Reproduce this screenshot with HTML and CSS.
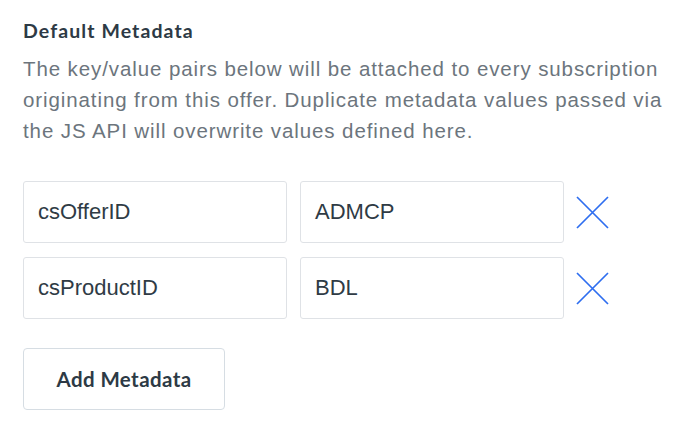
FILE: index.html
```html
<!DOCTYPE html>
<html>
<head>
<meta charset="utf-8">
<link rel="stylesheet" href="styles.css">
</head>
<body>
<section class="panel">
  <h2 class="title">Default Metadata</h2>
  <p class="desc">The key/value pairs below will be attached to every subscription originating from this offer. Duplicate metadata values passed via the JS API will overwrite values defined here.</p>
  <div class="rows">
    <div class="row">
      <div class="field">csOfferID</div>
      <div class="field">ADMCP</div>
      <button class="remove" aria-label="Remove"><svg width="33" height="33" viewBox="0 0 33 33"><path d="M1 1 L32 32 M32 1 L1 32" stroke="#2e6ef0" stroke-width="1.7" fill="none"/></svg></button>
    </div>
    <div class="row">
      <div class="field">csProductID</div>
      <div class="field">BDL</div>
      <button class="remove" aria-label="Remove"><svg width="33" height="33" viewBox="0 0 33 33"><path d="M1 1 L32 32 M32 1 L1 32" stroke="#2e6ef0" stroke-width="1.7" fill="none"/></svg></button>
    </div>
  </div>
  <button class="add">Add Metadata</button>
</section>
</body>
</html>
```
FILE: styles.css
```css
html, body { margin: 0; padding: 0; background: #fff; }
.panel { padding: 18px 0 0 23px; }
.title {
  margin: 0;
  font-family: Lato, sans-serif;
  font-weight: 700;
  font-size: 19.5px;
  letter-spacing: 1.1px;
  line-height: 26px;
  color: #2d3a45;
}
.desc {
  margin: 9px 0 0;
  width: 645px;
  font-family: "Liberation Sans", Arial, sans-serif;
  font-size: 20.5px;
  letter-spacing: 0.9px;
  line-height: 31px;
  color: #6c757d;
}
.rows { margin-top: 35px; display: flex; flex-direction: column; gap: 14px; }
.row { display: flex; align-items: center; gap: 13px; }
.field {
  box-sizing: border-box;
  width: 264px;
  height: 62px;
  border: 1px solid #dfe2e6;
  border-radius: 3px;
  padding: 0 14px;
  display: flex;
  align-items: center;
  font-family: "Liberation Sans", Arial, sans-serif;
  font-size: 22px;
  color: #2f3b45;
}
.remove {
  border: 0; background: none; padding: 0; margin-left: -1px;
  width: 33px; height: 33px; display: flex;
}
.add {
  margin-top: 29px;
  box-sizing: border-box;
  width: 202px;
  height: 62px;
  background: #fff;
  border: 1px solid #d6dde3;
  border-radius: 4px;
  font-family: Lato, sans-serif;
  font-weight: 700;
  font-size: 20.5px;
  letter-spacing: 0.4px;
  color: #2d3a45;
}
```
